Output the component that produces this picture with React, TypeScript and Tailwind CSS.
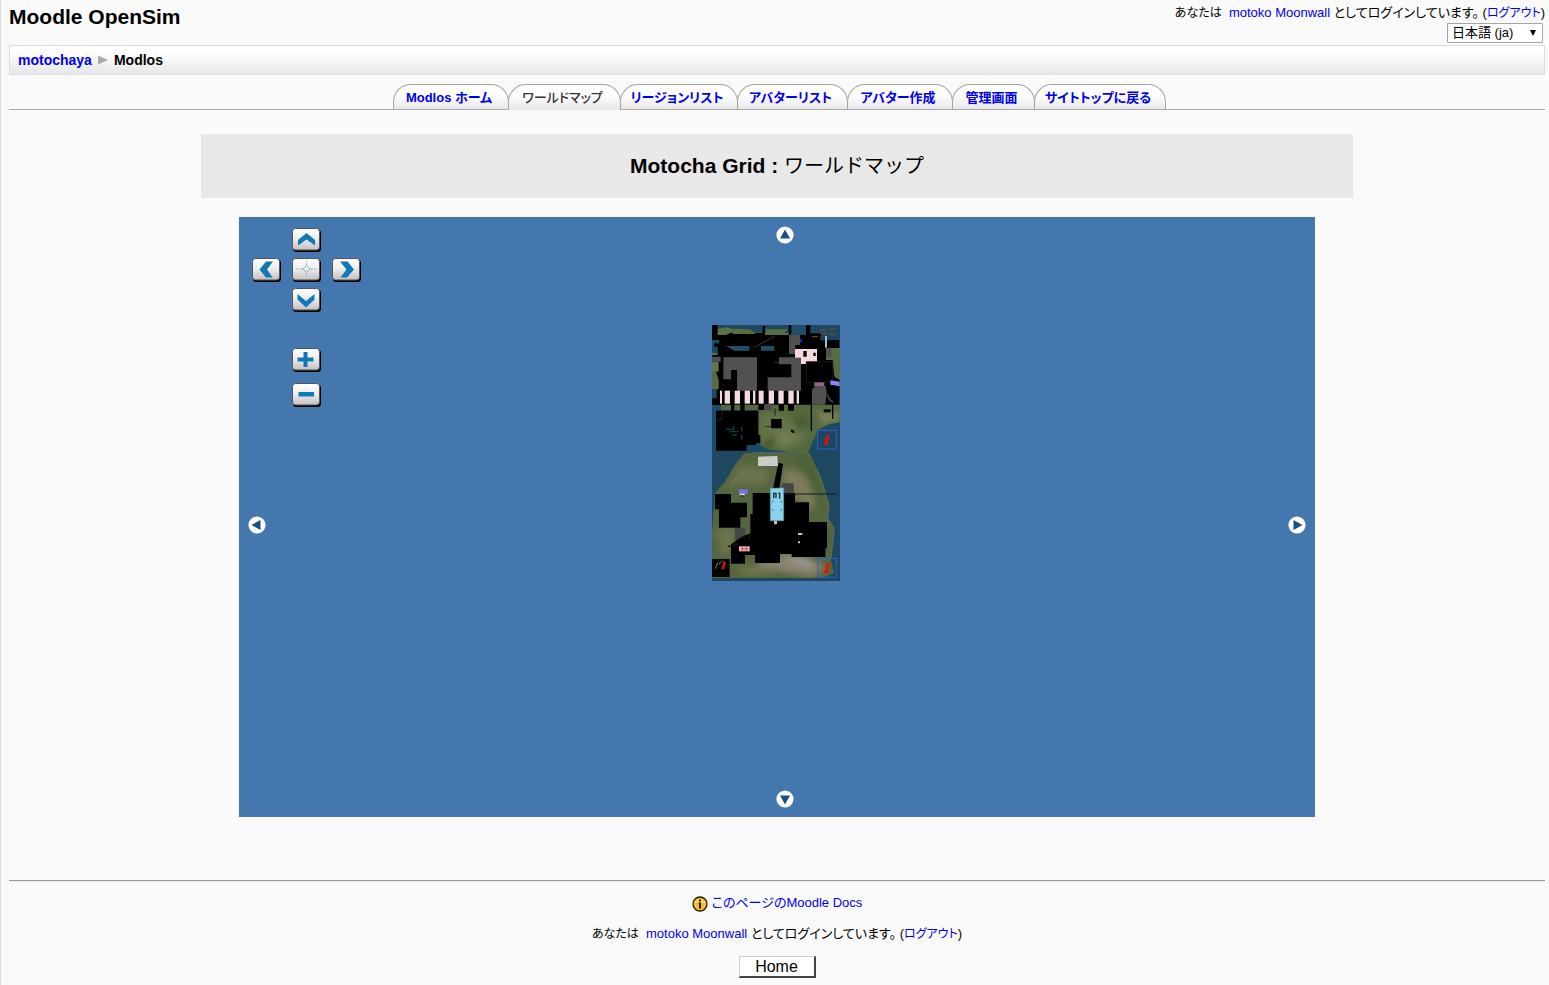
import React from "react";

const link = "text-[#0000ee] no-underline hover:underline";

function LoginInfo() {
  return (
    <p className="text-[13px] leading-4 whitespace-nowrap">
      <span className="text-[12px]">あなたは</span>&nbsp; <a href="#profile" className={link}>motoko Moonwall</a> としてログインしています。 (
      <a href="#logout" className={`text-[12px] ${link}`}>ログアウト</a>)
    </p>
  );
}

const tabs = [
  { label: "Modlos ホーム", width: "w-[116px]" },
  { label: "ワールドマップ", width: "w-[113px]", current: true },
  { label: "リージョンリスト", width: "w-[118px]" },
  { label: "アバターリスト", width: "w-[111px]" },
  { label: "アバター作成", width: "w-[106px]" },
  { label: "管理画面", width: "w-[83px]" },
  { label: "サイトトップに戻る", width: "w-[132px]" },
];

function Tabs() {
  return (
    <nav aria-label="Modlos" className="mt-[9px] flex justify-center border-b border-[#aaa] pl-1">
      {tabs.map((t) => (
        <a
          key={t.label}
          href="#tab"
          aria-current={t.current ? "page" : undefined}
          className={`-mr-px -mb-px flex h-[26px] items-center justify-center rounded-t-[18px] border border-[#a3a3a3] bg-linear-to-b from-white from-40% to-[#e8e8e8] pt-px pr-1 text-[13px] whitespace-nowrap ${t.width} ${
            t.current ? "border-b-[#ececec] font-medium text-[#333]" : "border-b-[#aaa] font-bold text-[#0000ee]"
          }`}
        >
          {t.label}
        </a>
      ))}
    </nav>
  );
}

const glyphs: Record<string, React.ReactNode> = {
  上: <path d="M6 12 14.500 5 23 12V17.500L14.500 11.500 6 17.500Z" fill="#1279b8" />,
  下: <path d="M5.500 6 14 13 22.500 6V11.500L14 19.500 5.500 11.500Z" fill="#1279b8" />,
  左: <path d="M14 3.500H21L15 11.500 20.500 19.500H14L7.500 11.500Z" fill="#1279b8" />,
  右: <path d="M8 3.500H15.500L22 11.500 15 19.500H8.500L14.500 11.500Z" fill="#1279b8" />,
  中央: (
    <g stroke="#8fb4ce" fill="none">
      <path d="m14.500 7.500 3.500 3.500-3.500 3.500-3.500-3.500Z" />
      <path d="M14.500 3v1M14.500 5.500v2M14.500 14.500v2M14.500 18v1M4.500 11h2M8 11h3M18 11h3M22.500 11h2" />
    </g>
  ),
  拡大: <path d="M11.500 4h4v5.500h6v4h-6V19h-4v-5.500h-6v-4h6Z" fill="#1279b8" />,
  縮小: <path d="M6.500 9h15.500v4.500H6.500Z" fill="#1279b8" />,
};

function PadButton({ name, place }: { name: string; place: string }) {
  return (
    <button aria-label={name} className={`h-6 w-[29px] ${place}`}>
      <svg viewBox="0 0 29 24" className="h-6 w-[29px]">
        <defs>
          <linearGradient id={`pad-${name}`} x1="0" y1="0" x2="0" y2="1">
            <stop offset="0" stopColor="#fff" />
            <stop offset=".45" stopColor="#f0efef" />
            <stop offset="1" stopColor="#c2c0c0" />
          </linearGradient>
        </defs>
        <rect x="1" y="1.500" width="28" height="22.500" rx="3.500" fill="#000" />
        <rect x=".5" y=".5" width="27" height="21.500" rx="3" fill={`url(#pad-${name})`} stroke="#555" />
        {glyphs[name]}
      </svg>
    </button>
  );
}

function EdgeButton({ name, angle, place }: { name: string; angle: number; place: string }) {
  return (
    <button aria-label={name} className={`absolute h-[18px] w-[18px] ${place}`}>
      <svg viewBox="0 0 18 18" className="h-[18px] w-[18px]">
        <circle cx="9" cy="9" r="8.600" fill="#fff" />
        <path d="M9 3.500 14 12.500H4Z" fill="#174f87" transform={`rotate(${angle} 9 9)`} />
      </svg>
    </button>
  );
}

const stripes = [[42, 6], [56, 16], [86, 16], [116, 16], [141, 7], [158, 15], [188, 16], [217, 16], [247, 16], [272, 7]];

function RegionTiles() {
  return (
    <svg viewBox="0 0 128 256" className="h-[256px] w-[128px]" role="img" aria-label="リージョン">
      <defs>
        <filter id="soft" x="-20%" y="-20%" width="140%" height="140%">
          <feGaussianBlur stdDeviation="9" />
        </filter>
        <clipPath id="north">
          <path d="M18 15H402V399H18Z" />
        </clipPath>
        <clipPath id="island">
          <path d="M115 10 155 8 310 8 335 60 350 95 370 165 365 205 385 235 375 330 385 370 345 385H18V245L27 130 60 90 90 40Z" />
        </clipPath>
      </defs>
      <rect width="128" height="256" fill="#1d4860" />
      <g transform="translate(-6 -5) scale(.33333)" clipPath="url(#north)">
        <path d="M18 30 60 22 120 35 260 40V60H18Z" fill="#5b7044" />
        <path d="M18 100H45V250L30 205H18Z" fill="#63734a" />
        <path d="M35 45H60L75 38H170V18H177V45H248V15H256V45H300V15H313V40H345V60H400V250L402 260H18V235H32V208H38V180H28V155H38V125H18V105H35V80H25V70H40V60H18V15H35Z" fill="#000" />
        <path d="M85 26 130 28 150 42H80ZM180 28H246L230 45H180ZM360 84H402V120H360ZM380 120H402V180L385 170ZM18 155H30L38 180 32 208H18Z" fill="#596b40" />
        <path d="M60 78H130V92H85ZM165 78H205V92H165ZM257 15H298V43H257Z" fill="#204e69" />
        <path d="m142 84 65-36M205 128H220" stroke="#333" strokeWidth="3" />
        <path d="M317 50H336M342 30H363M342 40H363M370 27H390M370 43H390" stroke="#86483e" strokeWidth="3" />
        <path d="M343 55H375" stroke="#1c4453" strokeWidth="12" />
        <path d="M360 48V83" stroke="#92bfd5" strokeWidth="6" />
        <path d="M52 112H153V212H93V150H75V178H52ZM219 112H285V212H185V172H256V133H219ZM249 45H282V75H268V102H249ZM18 110H44V125H18ZM360 83H376V110H360ZM325 197H358L362 215 358 254H318V205H325Z" fill="#515151" />
        <path d="M282 57H288V67H282Z" fill="#1426d4" />
        <path d="M267 87H333V125H300V132H285V113H267Z" fill="#f4d9df" />
        <path d="M292 93H302V110H292ZM322 98H329V108H322Z" fill="#000" />
        <path d="M301 125H380V187H301Z" fill="#000" stroke="#252525" strokeWidth="2" />
        <path d="M325 187H355V198H325Z" fill="#8c6689" />
        <path d="m373 181 28 4V199l-28-5Z" fill="#8b82fb" />
        <path d="M363 222Q367 240 382 246" stroke="#444" strokeWidth="5" fill="none" />
        {stripes.map(([x, w]) => (
          <path key={x} d={`M${x} 212h${w}v39h${-w}Z`} fill="#f4d9df" />
        ))}
        <path d="M45 254H402V405H125L157 372V270H45Z" fill="#56683d" />
        <g filter="url(#soft)">
          <path d="M165 285 220 275 250 300 300 330 290 370 230 390 160 360Z" fill="#65744a" />
          <path d="M330 275 400 275V300L350 315ZM200 340 275 345 240 375Z" fill="#7c805a" />
          <path d="M265 290 310 300 280 340ZM170 370 210 340 200 390Z" fill="#425a2c" />
        </g>
        <path d="M18 255H45V300H30V405H18ZM122 377 160 373 185 388 250 396 305 400 318 368 338 328 370 312 402 307V405H122Z" fill="#1c4a65" />
        <path d="M30 272H75V252H85V272H103V252H116V272H157V345H163V370H150V375H122V392H30ZM157 252H175V270H157ZM195 297H227V325H195ZM218 252H234V272H218ZM246 252H264V272H246ZM314 252H318V332H314ZM378 252H382V297H378ZM353 268H374V277H353ZM255 328 265 332V340L255 336Z" fill="#000" />
        <path d="M176 252H197V270H176Z" fill="#4b4b4b" />
        <path d="M60 328H78M70 335H98M82 318V332M107 320V334M107 345V358M80 345H92" stroke="#1a3c45" strokeWidth="4" />
        <path d="M48 270V298H35M207 265V287M177 320H195" stroke="#202a1d" strokeWidth="3" fill="none" />
        <path d="M335 331H391V387H335Z" fill="#1b4560" stroke="#3460c4" strokeWidth="3" />
        <path d="M361 345 371 344 369 351 360 352ZM356 354 369 353 364 368 369 370 365 374 353 374 360 358 354 359Z" fill="#f00c0c" />
      </g>
      <g transform="translate(-6 125) scale(.33333)">
        <g clipPath="url(#island)">
          <path d="M18 0H402V400H18Z" fill="#55663f" />
          <g filter="url(#soft)">
            <path d="M100 45 140 50 190 60 180 105 100 100 60 120Z" fill="#6b734e" />
            <path d="M240 50 310 80 340 130 320 180 270 145 225 90Z" fill="#7b7a5c" />
            <path d="M30 240 80 230 90 290 50 320ZM90 350 180 345 210 375 120 378Z" fill="#6d754e" />
            <path d="M145 345 230 310 300 320 360 350 320 380 230 365Z" fill="#8b836e" />
            <path d="M260 15 300 15 335 80 350 150 340 190 310 100ZM340 210 375 250 365 330Z" fill="#4c6237" />
            <path d="M240 320 300 330 325 350 275 340Z" fill="#9ba5a5" />
          </g>
        </g>
        <path d="M140 8H300L315 18M335 60 345 95 370 165 365 205 385 235 375 325" fill="none" stroke="#66745c" strokeWidth="2" />
        <path d="M217 38 231 42 220 116H201Z" fill="#000" />
        <path d="M228 100H263V132H228ZM87 233H118V270H87Z" fill="#464646" />
        <path d="M27 132H75V158H123V202H103V233H39V178H27ZM140 129H267V157H309V216H363V295H358V321H257V312H222V339H147V315H117V341H75V283L105 262 133 250V192H140Z" fill="#000" />
        <path d="M233 132H392" stroke="#111c1b" strokeWidth="3" />
        <path d="M65 290 95 282M105 263 120 257M130 255V268" stroke="#171916" strokeWidth="4" />
        <path d="M156 20 214 18 216 48H156Z" fill="#cbcbc7" />
        <path d="M193 115 233 114V212H193Z" fill="#8bd2ed" stroke="#629eae" strokeWidth="2" />
        <path d="M203 145V130H210V144M217 130H221V146" stroke="#142b34" strokeWidth="4" fill="none" />
        <path d="M198 155H202M224 155H228M198 180H202M224 180H228" stroke="#387083" strokeWidth="4" />
        <path d="M204 212H213V223H204ZM276 249H289V255H276ZM276 274H282V280H276Z" fill="#c5c4ae" />
        <path d="M99 118H126V131H99Z" fill="#7773e6" />
        <path d="M101 131H116V136H101Z" fill="#ddd" />
        <path d="M104 136H112V140H104Z" fill="#111" />
        <path d="M99 289H131V304H99Z" fill="#efb9b9" />
        <path d="M104 297H127M109 290V302M121 290V302" stroke="#c84d4d" strokeWidth="3" />
        <path d="M18 327H71V381H18Z" fill="#040404" />
        <path d="M50 333 55 340 47 357M58 336 52 358" stroke="#b51b19" strokeWidth="5" fill="none" />
        <path d="M36 337 28 356M44 334 40 343" stroke="#777" strokeWidth="3" />
        <path d="M335 325H391V382H335Z" fill="none" stroke="#3460c4" strokeWidth="3" />
        <path d="M363 340 374 339 371 346 361 347ZM357 349 370 348 364 363 370 365 365 369 353 369 361 353 355 354Z" fill="#f00c0c" />
      </g>
    </svg>
  );
}

export default function App() {
  return (
    <div
      lang="ja"
      className="min-h-screen border-l border-[#ddd] bg-[#fafafa] pr-1 pb-2 pl-2 font-['Liberation_Sans','Noto_Sans_CJK_JP',sans-serif] text-[13px] text-black [font-feature-settings:'palt']"
    >
      <header className="flex h-[45px] items-start justify-between">
        <h1 className="pt-1 text-[21px] leading-[26px] font-bold">Moodle OpenSim</h1>
        <div className="flex flex-col items-end pt-[5px]">
          <LoginInfo />
          <div className="relative mt-0.5 mr-0.5">
            <select
              aria-label="言語"
              className="block h-5 w-24 appearance-none rounded-[1px] border border-[#a5a5a5] bg-white pl-1 text-[13px] leading-[18px]"
            >
              <option>日本語 (ja)</option>
            </select>
            <svg viewBox="0 0 6 6" className="pointer-events-none absolute top-[7px] right-[7px] h-1.5 w-1.5">
              <path d="M0 0h6L3 6Z" />
            </svg>
          </div>
        </div>
      </header>

      <nav
        aria-label="現在地"
        className="flex h-[30px] items-center border border-[#ddd] bg-linear-to-b from-white from-20% to-[#e6e6e6] px-2 text-[14px] font-bold"
      >
        <a href="#top" className={link}>motochaya</a>
        <svg viewBox="0 0 10 10" className="mx-1.5 h-2.5 w-2.5">
          <path d="M0 0.500 10 5 0 9.500Z" fill="#aaa" />
        </svg>
        <span>Modlos</span>
      </nav>

      <Tabs />

      <main className="pt-6">
        <h2 className="mx-auto flex h-16 w-3/4 items-center justify-center bg-[#e8e8e8] text-[21px] font-bold">
          Motocha Grid :&nbsp;<span className="text-[20px] font-normal [font-feature-settings:normal]">ワールドマップ</span>
        </h2>

        <section aria-label="ワールドマップ" className="relative mx-auto mt-[19px] h-[600px] w-[70%] bg-[#4477ae]">
          <div className="flex justify-center pt-[108px] pr-0.5">
            <RegionTiles />
          </div>
          <div className="absolute top-[11px] left-[13px] grid grid-cols-[29px_29px_29px] gap-x-[11px] gap-y-1.5">
            <PadButton name="上" place="col-start-2" />
            <PadButton name="左" place="col-start-1 row-start-2" />
            <PadButton name="中央" place="col-start-2 row-start-2" />
            <PadButton name="右" place="col-start-3 row-start-2" />
            <PadButton name="下" place="col-start-2 row-start-3" />
            <PadButton name="拡大" place="col-start-2 row-start-4 mt-[30px]" />
            <PadButton name="縮小" place="col-start-2 row-start-5 mt-[5px]" />
          </div>
          <EdgeButton name="北へ" angle={0} place="top-[9px] left-1/2 -ml-px" />
          <EdgeButton name="南へ" angle={180} place="bottom-[9px] left-1/2 -ml-px" />
          <EdgeButton name="西へ" angle={-90} place="top-[299px] left-[9px]" />
          <EdgeButton name="東へ" angle={90} place="top-[299px] right-[9px]" />
        </section>
      </main>

      <hr className="mt-[63px] h-0.5 border-t border-b border-t-[#999] border-b-[#eee]" />

      <footer className="flex flex-col items-center">
        <a href="#docs" className={`mt-3 flex items-center gap-1 leading-4 ${link}`}>
          <svg viewBox="0 0 16 16" className="mt-0.5 h-4 w-4">
            <circle cx="8" cy="8" r="7" fill="#f9bd25" stroke="#241b08" strokeWidth="1.300" />
            <path d="M3 7a5.200 5.200 0 0 1 10 0" fill="#ffda68" />
            <path d="M7 3.500h2v2H7ZM6.500 6.500H9V12.500H7V7.500h-.5Z" fill="#241b08" />
          </svg>
          <span>このページのMoodle Docs</span>
        </a>
        <div className="mt-3.5">
          <LoginInfo />
        </div>
        <button className="mt-3.5 h-[22px] w-[77px] border border-r-2 border-b-2 border-[#ccc] border-r-[#444] border-b-[#444] bg-white text-[16px] leading-[19px]">
          Home
        </button>
      </footer>
    </div>
  );
}
